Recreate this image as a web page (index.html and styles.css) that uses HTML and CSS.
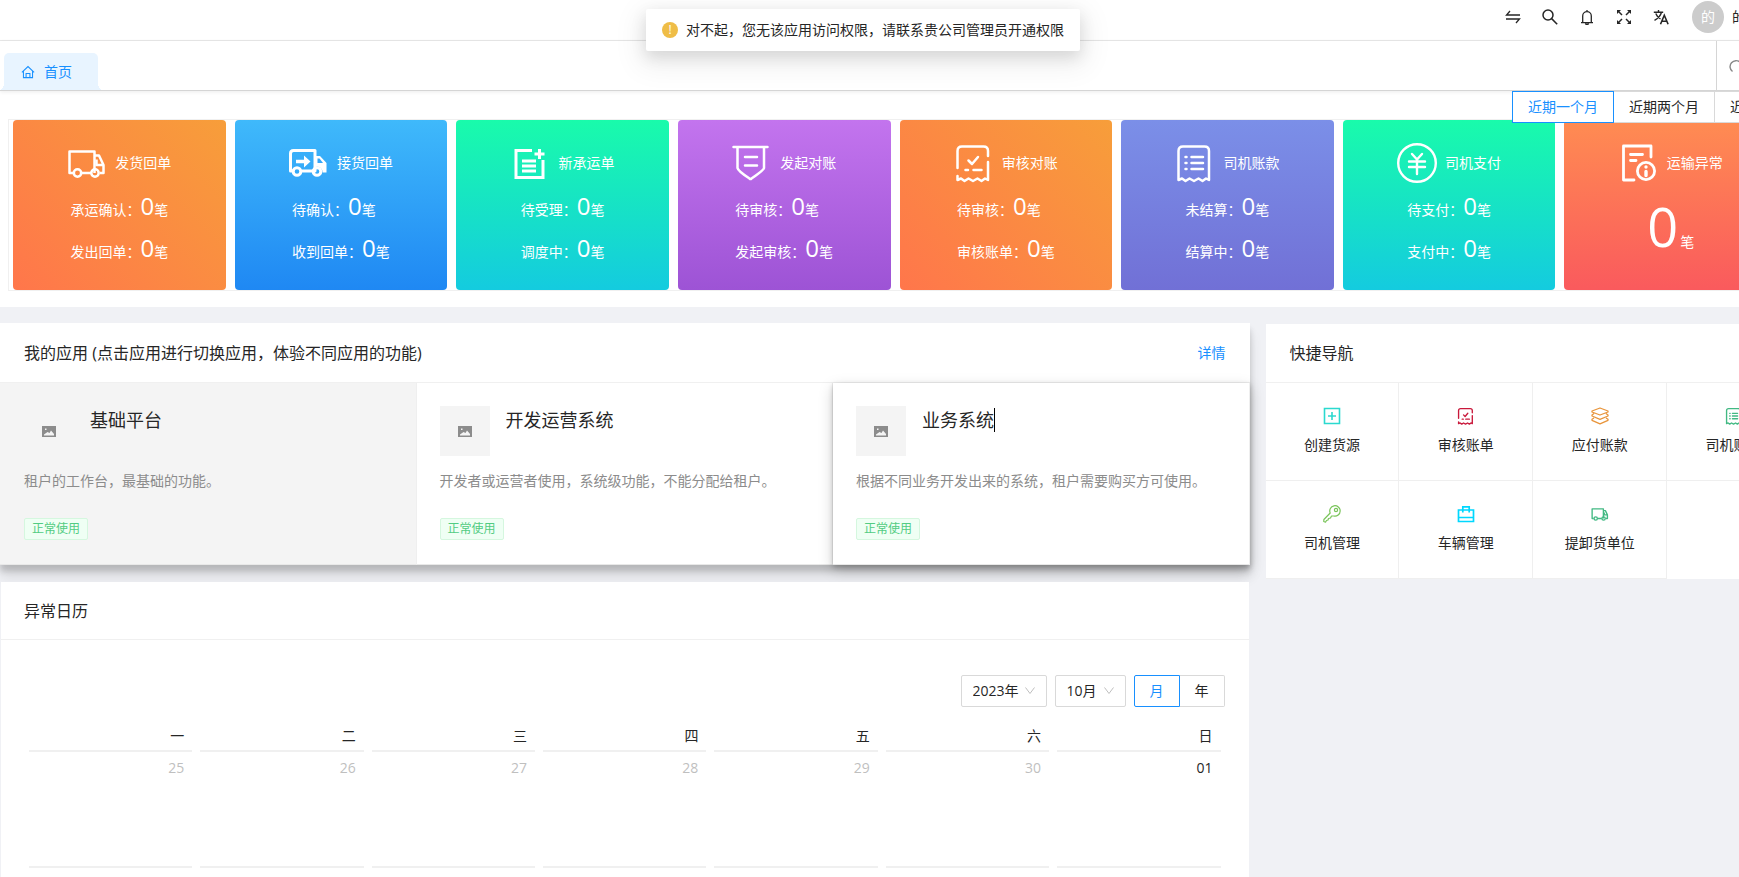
FILE: index.html
```html
<!DOCTYPE html>
<html lang="zh-CN">
<head>
<meta charset="utf-8">
<title>首页</title>
<link rel="stylesheet" href="styles.css">
</head>
<body>
<svg class="sprite" aria-hidden="true">
  <symbol id="i-truck" viewBox="0 0 40 40"><g fill="none" stroke="currentColor" stroke-linejoin="round"><path d="M6 30H2.500V8.500H27.500V30M15 30H24"/><path d="M27.500 12.500H32L36.500 22V30H33M29.500 16.500V22H36"/><circle cx="10.500" cy="30" r="3.700"/><circle cx="28" cy="30" r="3.700"/></g></symbol>
  <symbol id="i-truck-in" viewBox="0 0 40 40"><g fill="none" stroke="currentColor" stroke-width="3" stroke-linejoin="round"><path d="M4 28H1.500V10.500Q1.500 7.500 4.500 7.500H26V28H13"/><circle cx="8" cy="28.500" r="3.800"/><circle cx="28" cy="28.500" r="3.800"/></g><path fill="currentColor" d="M26 13H31L37.500 20V29.500H33.500A5.500 5.500 0 0 0 26 24ZM7 16.800H15V12.500L21.500 18.500L15 24.500V20.200H7Z"/><path fill="#36a6f8" d="M28.500 15.500H30.500L34 20H28.500Z"/></symbol>
  <symbol id="i-order" viewBox="0 0 40 40"><g fill="none" stroke="currentColor" stroke-width="3"><path d="M21 7.500H5V34.500H32V17M28.500 6V16M23.500 11H33.500"/><path d="M11 18H25M11 23H25M11 28H25"/></g></symbol>
  <symbol id="i-shield" viewBox="0 0 40 40"><g fill="none" stroke="currentColor" stroke-width="2.500" stroke-linecap="round" stroke-linejoin="round"><path d="M1.500 4H35.500M5.500 4V25Q6 28 17.500 35.500Q18.500 36.500 19.500 35.500Q32 27 32 25V4M13 14H25M13 22.500H25"/></g></symbol>
  <symbol id="i-audit" viewBox="0 0 40 40"><g fill="none" stroke="currentColor" stroke-linecap="round" stroke-linejoin="round"><path d="M3.500 25V8Q3.500 3.500 8 3.500H29.500Q34 3.500 34 8V13M34 19V37L31 35.500L27.500 38L23.500 35.500L19 38L14.500 35.500L10.500 38L7 35.500L3.500 37V33"/><path d="M14.500 17.500L18 21L24 14M11.500 27H14M19.500 27H27.500"/></g></symbol>
  <symbol id="i-bill" viewBox="0 0 40 40"><g fill="none" stroke="currentColor" stroke-linecap="round" stroke-linejoin="round"><path d="M3.500 37V8Q3.500 3.500 8 3.500H29.500Q34 3.500 34 8V37L31 35.500L27.500 38L23.500 35.500L19 38L14.500 35.500L10.500 38L7 35.500Z"/><path d="M10.500 14H11.500M10.500 20H11.500M10.500 26H11.500M16.500 14H28M16.500 20H28M16.500 26H28"/></g></symbol>
  <symbol id="i-yen" viewBox="0 0 40 40"><g fill="none" stroke="currentColor" stroke-width="2.400" stroke-linecap="round" stroke-linejoin="round"><circle cx="20" cy="20" r="18.800"/><path d="M15 11L20 16.500L25 11M12 18.500H28M12 24H28M20 17V31"/></g></symbol>
  <symbol id="i-warn" viewBox="0 0 40 40"><g fill="none" stroke="currentColor" stroke-width="2.800" stroke-linecap="round" stroke-linejoin="round"><path d="M32 14V3H4.500V37H15M11.500 11.500H23.500M11.500 17.500H17"/><circle cx="27" cy="28" r="8.600"/><path stroke-width="3.400" d="M27 24V24.100M27 28.500V32.500"/></g></symbol>
  <symbol id="i-home" viewBox="0 0 16 16"><g fill="none" stroke="currentColor" stroke-width="1.200"><path d="M1 8.500L8 1.800L15 8.500M2.800 7V14.400H13.200V7M5.800 14V9.800H10.200V14"/></g></symbol>
  <symbol id="i-img" viewBox="0 0 14 11"><path fill="currentColor" fill-rule="evenodd" d="M0 0H14V11H0ZM2 9.500H12V8L9 4.500L7.500 7L5.500 6L2 8.500ZM3 2.500V4H4.500V2.500Z"/></symbol>
  <symbol id="i-chev" viewBox="0 0 12 12"><path fill="none" stroke="currentColor" stroke-width="1" d="M1.500 2.500L6 8.500L10.500 2.500"/></symbol>
  <symbol id="i-plus" viewBox="0 0 18 18"><path fill="none" stroke="currentColor" stroke-width="1.600" d="M1.500 1.500H16.500V16.500H1.500ZM9 5V13M5 9H13"/></symbol>
  <symbol id="i-layers" viewBox="0 0 18 18"><g fill="none" stroke="currentColor" stroke-width="1.300" stroke-linejoin="round"><path d="M9 1L17 4V5L9 8L1 5V4ZM3 6.500L1 8V9L9 12.300L17 9V8L15 6.500M3 11L1 12.300V13.300L9 16.800L17 13.300V12.300L15 11"/></g></symbol>
  <symbol id="i-key" viewBox="0 0 18 18"><g fill="none" stroke="currentColor" stroke-width="1.200" stroke-linejoin="round"><path d="M7.200 8A5.200 5.200 0 1 1 10.800 11L8.500 11L7.500 13L5.500 13.500L5 15L3.500 15.500L2.500 17.200L0.700 16.500L0.900 14.500Z"/><circle cx="13" cy="5" r="1.600"/></g></symbol>
  <symbol id="i-case" viewBox="0 0 18 18"><path fill="none" stroke="currentColor" stroke-width="1.700" d="M1.500 5H16.500V16.500H1.500ZM5.800 7.500V1.800H12.200V7.500M1.500 12.500H16.500"/></symbol>
  <symbol id="i-swap" viewBox="0 0 16 16"><path fill="none" stroke="currentColor" stroke-width="1.300" d="M5 2L1.500 6H15M1 10H14.500L11 14"/></symbol>
  <symbol id="i-search" viewBox="0 0 16 16"><g fill="none" stroke="currentColor" stroke-width="1.500"><circle cx="6" cy="6" r="5"/><path d="M9.600 9.600L15.200 15.200"/></g></symbol>
  <symbol id="i-bell" viewBox="0 0 16 16"><path fill="none" stroke="currentColor" stroke-width="1.300" d="M2 13.700H14M3.700 13.500V7A4.300 4.300 0 0 1 12.300 7V13.500M8 1V2.500M6.300 14.500Q8 16.500 9.700 14.500"/></symbol>
  <symbol id="i-full" viewBox="0 0 16 16"><g stroke="currentColor" stroke-width="1.500" fill="none"><path d="M2 2L6 6M14 2L10 6M2 14L6 10M14 14L10 10"/></g><path fill="currentColor" d="M1 1H5L1 5ZM15 1V5L11 1ZM1 15V11L5 15ZM15 15H11L15 11Z"/></symbol>
  <symbol id="i-lang" viewBox="0 0 16 16"><g fill="none" stroke="currentColor"><path stroke-width="1.400" d="M.8 3.200H10.200M5.500 1V3.200M8.400 3.500Q7 8.500 1.500 11.300M2.800 4.500Q4 8 7.500 10"/><path stroke-width="1.600" d="M7.500 15.200L11.300 6.200L15.100 15.200M8.800 12.200H13.800"/></g></symbol>
  <symbol id="i-reload" viewBox="0 0 16 16"><path fill="none" stroke="currentColor" stroke-width="1.400" d="M4.500 13.500A6 6 0 1 1 12 13.200M12 9.500V13.500H15"/></symbol>
</svg>

<div class="page">
  <header class="topbar">
    <nav class="tools" aria-label="工具">
      <button type="button" aria-label="切换"><svg><use href="#i-swap"/></svg></button>
      <button type="button" aria-label="搜索"><svg><use href="#i-search"/></svg></button>
      <button type="button" aria-label="通知"><svg><use href="#i-bell"/></svg></button>
      <button type="button" aria-label="全屏"><svg><use href="#i-full"/></svg></button>
      <button type="button" aria-label="语言"><svg><use href="#i-lang"/></svg></button>
    </nav>
    <div class="user"><span class="avatar">的</span><span>的</span></div>
  </header>

  <div class="tabbar">
    <a class="tab" href="#"><svg><use href="#i-home"/></svg>首页</a>
    <button class="reload" type="button" aria-label="刷新"><svg><use href="#i-reload"/></svg></button>
  </div>

  <section class="stats">
    <div class="periods">
      <button class="period period-on" type="button">近期一个月</button>
      <button class="period" type="button">近期两个月</button>
      <button class="period" type="button">近期三个月</button>
    </div>
    <div class="cards">
      <article class="card orange"><h2><svg><use href="#i-truck"/></svg>发货回单</h2><div class="rows"><p>承运确认：<b>0</b>笔</p><p>发出回单：<b>0</b>笔</p></div></article>
      <article class="card blue"><h2><svg><use href="#i-truck-in"/></svg>接货回单</h2><div class="rows"><p>待确认：<b>0</b>笔</p><p>收到回单：<b>0</b>笔</p></div></article>
      <article class="card green"><h2><svg><use href="#i-order"/></svg>新承运单</h2><div class="rows"><p>待受理：<b>0</b>笔</p><p>调度中：<b>0</b>笔</p></div></article>
      <article class="card purple"><h2><svg><use href="#i-shield"/></svg>发起对账</h2><div class="rows"><p>待审核：<b>0</b>笔</p><p>发起审核：<b>0</b>笔</p></div></article>
      <article class="card orange"><h2><svg><use href="#i-audit"/></svg>审核对账</h2><div class="rows"><p>待审核：<b>0</b>笔</p><p>审核账单：<b>0</b>笔</p></div></article>
      <article class="card indigo"><h2><svg><use href="#i-bill"/></svg>司机账款</h2><div class="rows"><p>未结算：<b>0</b>笔</p><p>结算中：<b>0</b>笔</p></div></article>
      <article class="card green"><h2><svg><use href="#i-yen"/></svg>司机支付</h2><div class="rows"><p>待支付：<b>0</b>笔</p><p>支付中：<b>0</b>笔</p></div></article>
      <article class="card red"><h2><svg><use href="#i-warn"/></svg>运输异常</h2><p class="big"><b>0</b>笔</p></article>
    </div>
  </section>

  <main class="columns">
    <div class="left">
      <section class="panel apps-panel">
        <div class="panel-head"><h3>我的应用 (点击应用进行切换应用，体验不同应用的功能)</h3><a href="#">详情</a></div>
        <div class="apps">
          <article class="app app-current"><div class="app-top"><span class="thumb"><svg><use href="#i-img"/></svg></span><h4>基础平台</h4></div><p>租户的工作台，最基础的功能。</p><span class="tag">正常使用</span></article>
          <article class="app"><div class="app-top"><span class="thumb"><svg><use href="#i-img"/></svg></span><h4>开发运营系统</h4></div><p>开发者或运营者使用，系统级功能，不能分配给租户。</p><span class="tag">正常使用</span></article>
          <article class="app app-hover"><div class="app-top"><span class="thumb"><svg><use href="#i-img"/></svg></span><h4 class="caret">业务系统</h4></div><p>根据不同业务开发出来的系统，租户需要购买方可使用。</p><span class="tag">正常使用</span></article>
        </div>
      </section>

      <section class="panel calendar">
        <div class="panel-head cal-head"><h3>异常日历</h3></div>
        <div class="cal-body">
          <div class="cal-tools">
            <span class="pick year"><select aria-label="年份"><option>2023年</option></select><svg><use href="#i-chev"/></svg></span>
            <span class="pick month"><select aria-label="月份"><option>10月</option></select><svg><use href="#i-chev"/></svg></span>
            <div class="modes"><button class="mode mode-on" type="button">月</button><button class="mode" type="button">年</button></div>
          </div>
          <table>
            <thead><tr><th>一</th><th>二</th><th>三</th><th>四</th><th>五</th><th>六</th><th>日</th></tr></thead>
            <tbody>
              <tr><td><div class="day out">25</div></td><td><div class="day out">26</div></td><td><div class="day out">27</div></td><td><div class="day out">28</div></td><td><div class="day out">29</div></td><td><div class="day out">30</div></td><td><div class="day">01</div></td></tr>
              <tr><td><div class="day"></div></td><td><div class="day"></div></td><td><div class="day"></div></td><td><div class="day"></div></td><td><div class="day"></div></td><td><div class="day"></div></td><td><div class="day"></div></td></tr>
            </tbody>
          </table>
        </div>
      </section>
    </div>

    <section class="panel quick">
      <div class="panel-head"><h3>快捷导航</h3></div>
      <nav class="links" aria-label="快捷导航">
        <a class="teal" href="#"><svg><use href="#i-plus"/></svg><span>创建货源</span></a>
        <a class="crimson" href="#"><svg><use href="#i-audit"/></svg><span>审核账单</span></a>
        <a class="amber" href="#"><svg><use href="#i-layers"/></svg><span>应付账款</span></a>
        <a class="jade" href="#"><svg><use href="#i-bill"/></svg><span>司机账款</span></a>
        <a class="lime" href="#"><svg><use href="#i-key"/></svg><span>司机管理</span></a>
        <a class="cyan" href="#"><svg><use href="#i-case"/></svg><span>车辆管理</span></a>
        <a class="jade" href="#"><svg><use href="#i-truck"/></svg><span>提卸货单位</span></a>
      </nav>
    </section>
  </main>
</div>

<div class="toast-layer"><div class="toast" role="alert"><span class="toast-icon">!</span>对不起，您无该应用访问权限，请联系贵公司管理员开通权限</div></div>
</body>
</html>
```
FILE: styles.css
```css
* { box-sizing: border-box; }
html { overflow: hidden; }
body {
  margin: 0;
  height: 100vh;
  overflow: hidden;
  background: #f0f1f5;
  color: #262626;
  font: 14px/22px "Open Sans", "Noto Sans CJK SC", sans-serif;
}
h2, h3, h4, p { margin: 0; font-weight: 400; }
b { font-weight: 400; }
a { color: #1890ff; text-decoration: none; }
button, select { font: inherit; color: inherit; margin: 0; }
svg { display: block; flex: none; }
.sprite { position: absolute; width: 0; height: 0; }

/* The layout is 62px wider than the window and is cut at its right edge. */
.page {
  width: calc(100% + 62px);
  height: 100vh;
  overflow: hidden;
  display: flex;
  flex-direction: column;
}

.topbar {
  flex: none;
  display: flex;
  justify-content: flex-end;
  height: 41px;
  padding-right: 55px;
  background: #fff;
  border-bottom: 1px solid #e8e8e8;
}
.tools { display: flex; height: 34px; padding-right: 13px; }
.tools button {
  display: flex;
  align-items: center;
  justify-content: center;
  width: 37px;
  padding: 0;
  border: 0;
  background: none;
}
.tools svg { width: 16px; height: 16px; }
.user { display: flex; align-items: center; gap: 8px; height: 34px; }
.avatar {
  width: 32px;
  height: 32px;
  border-radius: 50%;
  background: #ccc;
  color: #fff;
  line-height: 32px;
  text-align: center;
}

.tabbar {
  flex: none;
  position: relative;
  z-index: 1;
  display: flex;
  justify-content: space-between;
  align-items: flex-end;
  height: 50px;
  padding-left: 4px;
  background: #fff;
  border-bottom: 1px solid #d5d5d5;
  box-shadow: 0 1px 4px rgba(0, 0, 0, .08);
}
.tab {
  position: relative;
  display: flex;
  align-items: center;
  gap: 9px;
  height: 37px;
  padding: 0 26px 0 17px;
  border-radius: 5px 5px 0 0;
  background: #e8f4ff;
}
.tab::before, .tab::after {
  content: "";
  position: absolute;
  bottom: 0;
  width: 4px;
  height: 8px;
}
.tab::before { right: 100%; background: radial-gradient(4px 8px at 0 0, transparent 98%, #e8f4ff); }
.tab::after { left: 100%; background: radial-gradient(4px 8px at 100% 0, transparent 98%, #e8f4ff); }
.tab svg { width: 14px; height: 14px; }
.reload {
  display: flex;
  align-items: center;
  width: 85px;
  height: 49px;
  padding: 0 0 0 11px;
  border: 0;
  border-left: 1px solid #d5d5d5;
  background: none;
  color: #888;
}
.reload svg { width: 16px; height: 16px; }

.stats {
  flex: none;
  position: relative;
  padding: 28px 18px 16px 8px;
  background: #fff;
}
.periods {
  position: absolute;
  z-index: 2;
  top: 0;
  right: 0;
  display: flex;
  width: 289px;
}
.period {
  flex: none;
  width: 101px;
  height: 32px;
  padding: 0;
  border: 1px solid #d9d9d9;
  border-left: 0;
  background: #fff;
}
.period-on { width: 102px; border: 1px solid #1890ff; color: #1890ff; }
.cards {
  display: grid;
  grid-template-columns: repeat(8, 1fr);
  gap: 9px;
  padding: 0 5px 0 4px;
  border: 1px solid #f0f0f0;
}
.card {
  display: flex;
  flex-direction: column;
  align-items: center;
  height: 170px;
  padding-top: 23px;
  border-radius: 4px;
  color: #fff;
}
.card h2 { display: flex; align-items: center; gap: 8px; font-size: 14px; }
.card h2 svg { width: 40px; height: 40px; stroke-width: 2.5; }
.rows { padding-top: 2px; }
.rows p { height: 42px; line-height: 42px; white-space: nowrap; }
.rows b { font-size: 24px; }
.big { padding-top: 3px; line-height: 80px; }
.big b { margin-right: 2px; font-size: 54px; }
.orange { background: linear-gradient(45deg, #ff764b, #f79e3a); }
.blue { background: linear-gradient(#3fb9fb, #1f88f3); }
.green { background: linear-gradient(#19fbab, #14cbdf); }
.purple { background: linear-gradient(#c374ee, #9d53d5); }
.indigo { background: linear-gradient(#7b8fe8, #7170d6); }
.red { background: linear-gradient(#ff8c52, #fa5a5d); }

.columns {
  flex: 1;
  min-height: 0;
  display: grid;
  grid-template-columns: 7fr 3fr;
  gap: 16px;
  align-items: start;
  padding-top: 16px;
}
.left { display: flex; flex-direction: column; gap: 17px; }
.panel { background: #fff; }
.panel-head {
  display: flex;
  justify-content: space-between;
  align-items: center;
  height: 60px;
  padding: 0 24px;
  border-bottom: 1px solid #f0f0f0;
}
.panel-head h3 { font-size: 16px; line-height: 24px; }

.apps-panel { box-shadow: 0 12px 12px rgba(0, 0, 0, .1), 0 6px 6px rgba(0, 0, 0, .16); }
.apps { display: grid; grid-template-columns: repeat(3, 1fr); }
.app {
  height: 182px;
  padding: 23px;
  border-right: 1px solid #efefef;
  border-bottom: 1px solid #e8e8e8;
}
.app:first-child { padding-left: 24px; }
.app-top { display: flex; gap: 16px; height: 50px; }
.thumb {
  display: flex;
  align-items: center;
  justify-content: center;
  width: 50px;
  background: #f4f4f4;
  color: #8c8c8c;
}
.thumb svg { width: 14px; height: 11px; }
.app h4 { height: 24px; margin-top: 2px; font-size: 18px; line-height: 24px; }
.app p { margin: 14px 0 26px; color: #8c8c8c; white-space: nowrap; }
.app-current { background: #f4f4f4; }
.app-hover { background: #fff; box-shadow: 0 5px 14px rgba(0, 0, 0, .18), 0 2px 5px rgba(0, 0, 0, .2); }
.caret { border-right: 1px solid #000; }
.tag {
  display: block;
  width: 64px;
  height: 22px;
  border: 1px solid #d5f7df;
  border-radius: 2px;
  background: #effff4;
  color: #52cc82;
  font-size: 12px;
  line-height: 20px;
  text-align: center;
}

.calendar { position: relative; margin: 0 1px; }
.cal-head { height: 58px; padding: 0 23px; }
.cal-body { padding: 35px 24px 0; }
.cal-tools { display: flex; justify-content: flex-end; gap: 8px; padding-bottom: 20px; }
.pick { position: relative; }
.pick select {
  width: 100%;
  height: 32px;
  padding: 0 11px;
  border: 1px solid #d9d9d9;
  border-radius: 2px;
  background: #fff;
  appearance: none;
}
.pick svg {
  position: absolute;
  top: 10px;
  right: 11px;
  width: 12px;
  height: 12px;
  color: #bfbfbf;
  pointer-events: none;
}
.year { width: 86px; }
.month { width: 71px; }
.modes { display: flex; }
.mode {
  width: 45px;
  height: 32px;
  padding: 0;
  border: 1px solid #d9d9d9;
  border-left: 0;
  border-radius: 0 2px 2px 0;
  background: #fff;
}
.mode-on {
  width: 46px;
  border: 1px solid #1890ff;
  border-radius: 2px 0 0 2px;
  color: #1890ff;
}
table { width: 100%; table-layout: fixed; border-collapse: collapse; }
th { padding: 0 12px 5px 0; font-weight: 400; line-height: 18px; text-align: right; }
td { padding: 0; }
.day {
  height: 116px;
  margin: 0 4px;
  padding: 4px 8px 0;
  border-top: 2px solid #f0f0f0;
  line-height: 24px;
  text-align: right;
}
.out { color: #bfbfbf; }

.quick { margin-top: 1px; }
.quick .panel-head { height: 59px; }
.links { display: grid; grid-template-columns: repeat(4, 1fr); grid-auto-rows: 98px; }
.links a {
  display: flex;
  flex-direction: column;
  align-items: center;
  gap: 9px;
  padding-top: 24px;
  border-right: 1px solid #efefef;
  border-bottom: 1px solid #efefef;
}
.links svg { width: 18px; height: 18px; stroke-width: 3; }
.links span { color: #262626; }
.teal { color: #2bd9cf; }
.crimson { color: #c9183b; }
.amber { color: #e8943a; }
.jade { color: #42b983; }
.lime { color: #7ac45a; }
.cyan { color: #00d8ff; }

.toast-layer {
  position: absolute;
  z-index: 10;
  top: 9px;
  left: 0;
  right: 13px;
  display: flex;
  justify-content: center;
}
.toast {
  display: flex;
  align-items: center;
  gap: 8px;
  padding: 10px 16px;
  border-radius: 2px;
  background: #fff;
  box-shadow: 0 6px 16px rgba(0, 0, 0, .12), 0 9px 28px 8px rgba(0, 0, 0, .06);
}
.toast-icon {
  width: 16px;
  height: 16px;
  border-radius: 50%;
  background: #efbd47;
  color: #fff;
  font-size: 12px;
  line-height: 16px;
  text-align: center;
}
```
